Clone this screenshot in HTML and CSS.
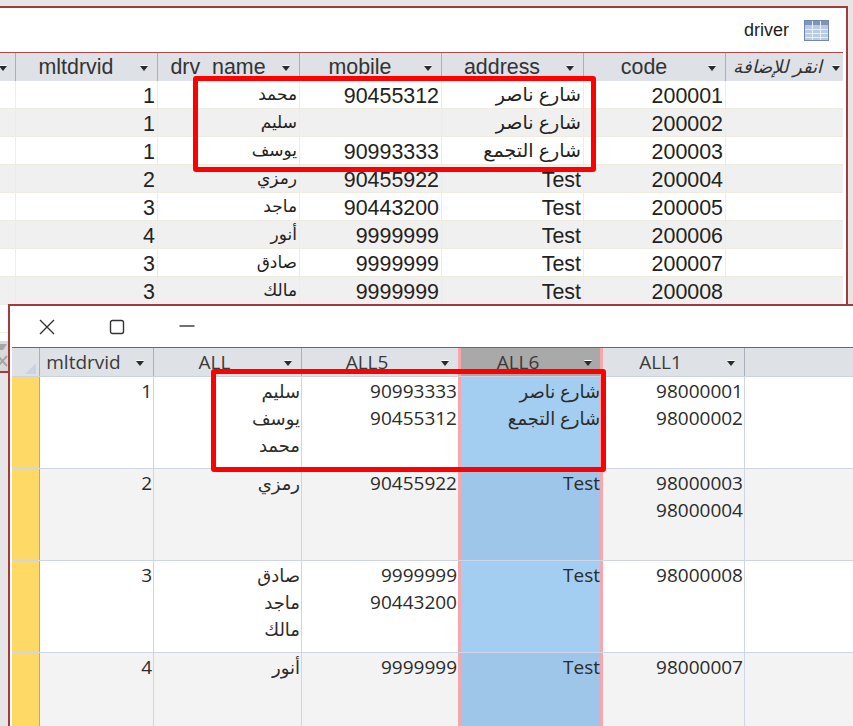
FILE: index.html
```html
<!DOCTYPE html>
<html lang="en">
<head>
<meta charset="utf-8">
<title>driver</title>
<link rel="stylesheet" href="styles.css">
</head>
<body>
<div class="desk">
  <section class="win win-back">
    <div class="back-title">
      <span class="back-name">driver</span>
      <svg class="tbl-icon" width="25" height="21" viewBox="0 0 25 21">
        <rect x="0.5" y="0.5" width="24" height="20" fill="#b9cbe4" stroke="#7388ad"/>
        <rect x="1" y="1" width="23" height="4" fill="#7d95bd"/>
        <path d="M1 9.5H24M1 13.5H24M1 17.5H24M8.5 1V20M16.5 1V20" stroke="#e9eef6" fill="none"/>
      </svg>
    </div>
    <div class="back-table">
      <div class="b-row b-head">
        <div class="b-h"><i class="arrow"></i></div>
        <div class="b-h"><span>mltdrvid</span><i class="arrow"></i></div>
        <div class="b-h"><span>drv_name</span><i class="arrow"></i></div>
        <div class="b-h"><span>mobile</span><i class="arrow"></i></div>
        <div class="b-h"><span>address</span><i class="arrow"></i></div>
        <div class="b-h"><span>code</span><i class="arrow"></i></div>
        <div class="b-h b-add"><span>انقر للإضافة</span><i class="arrow"></i></div>
      </div>
      <div class="b-row"><div></div><div>1</div><div class="nm">محمد</div><div>90455312</div><div class="ar">شارع ناصر</div><div>200001</div><div></div></div>
      <div class="b-row alt"><div></div><div>1</div><div class="nm">سليم</div><div></div><div class="ar">شارع ناصر</div><div>200002</div><div></div></div>
      <div class="b-row"><div></div><div>1</div><div class="nm">يوسف</div><div>90993333</div><div class="ar">شارع التجمع</div><div>200003</div><div></div></div>
      <div class="b-row alt"><div></div><div>2</div><div class="nm">رمزي</div><div>90455922</div><div>Test</div><div>200004</div><div></div></div>
      <div class="b-row"><div></div><div>3</div><div class="nm">ماجد</div><div>90443200</div><div>Test</div><div>200005</div><div></div></div>
      <div class="b-row alt"><div></div><div>4</div><div class="nm">أنور</div><div>9999999</div><div>Test</div><div>200006</div><div></div></div>
      <div class="b-row"><div></div><div>3</div><div class="nm">صادق</div><div>9999999</div><div>Test</div><div>200007</div><div></div></div>
      <div class="b-row alt"><div></div><div>3</div><div class="nm">مالك</div><div>9999999</div><div>Test</div><div>200008</div><div></div></div>
      <div class="b-row"></div>
    </div>
    <div class="back-foot">
      <svg class="foot-mark" width="8" height="30" viewBox="0 0 8 30">
        <path d="M0 3H7L3 9H0Z" fill="#a6a6a6"/>
        <path d="M-2 15L7 25M7 15L-2 25" stroke="#a6a6a6" stroke-width="2" fill="none"/>
      </svg>
    </div>
  </section>

  <section class="win win-front">
    <div class="front-title">
      <svg class="ctl" width="16" height="16" viewBox="0 0 16 16"><path d="M1 1L15 15M15 1L1 15" stroke="#333" stroke-width="1.4" fill="none"/></svg>
      <svg class="ctl" width="16" height="16" viewBox="0 0 16 16"><rect x="1.5" y="1.5" width="13" height="13" rx="2" stroke="#333" stroke-width="1.4" fill="none"/></svg>
      <svg class="ctl" width="16" height="16" viewBox="0 0 16 16"><path d="M0.5 7H15.5" stroke="#333" stroke-width="1.4" fill="none"/></svg>
    </div>
    <div class="front-table">
      <div class="f-row f-head">
        <div class="f-h f-corner"></div>
        <div class="f-h"><span>mltdrvid</span><i class="arrow"></i></div>
        <div class="f-h"><span>ALL</span><i class="arrow"></i></div>
        <div class="f-h"><span>ALL5</span><i class="arrow"></i></div>
        <div class="f-h sel"><span>ALL6</span><i class="arrow"></i></div>
        <div class="f-h"><span>ALL1</span><i class="arrow"></i></div>
        <div class="f-h f-end"></div>
      </div>
      <div class="f-row">
        <div class="rec"></div><div>1</div>
        <div class="ar"><p>سليم</p><p>يوسف</p><p>محمد</p></div>
        <div><p>90993333</p><p>90455312</p></div>
        <div class="sel ar"><p>شارع ناصر</p><p>شارع التجمع</p></div>
        <div><p>98000001</p><p>98000002</p></div><div></div>
      </div>
      <div class="f-row alt">
        <div class="rec"></div><div>2</div>
        <div class="ar"><p>رمزي</p></div>
        <div><p>90455922</p></div>
        <div class="sel"><p>Test</p></div>
        <div><p>98000003</p><p>98000004</p></div><div></div>
      </div>
      <div class="f-row">
        <div class="rec"></div><div>3</div>
        <div class="ar"><p>صادق</p><p>ماجد</p><p>مالك</p></div>
        <div><p>9999999</p><p>90443200</p></div>
        <div class="sel"><p>Test</p></div>
        <div><p>98000008</p></div><div></div>
      </div>
      <div class="f-row alt">
        <div class="rec"></div><div>4</div>
        <div class="ar"><p>أنور</p></div>
        <div><p>9999999</p></div>
        <div class="sel"><p>Test</p></div>
        <div><p>98000007</p></div><div></div>
      </div>
    </div>
  </section>

  <div class="mark mark-top"></div>
  <div class="mark mark-bottom"></div>
</div>
</body>
</html>
```

FILE: styles.css
```css
* { box-sizing: border-box; }
html, body { margin: 0; padding: 0; }
body { background: #e6e6e6; overflow: hidden; }
p { margin: 0; }

.desk { position: relative; width: 853px; height: 726px; overflow: hidden; }

.win { position: absolute; background: #fff; }

/* Back window */
.win-back {
  left: 0; top: 6px; width: 848px; height: 367px;
  border-top: 2px solid #a33a3f;
  border-right: 2px solid #a33a3f;
  border-bottom: 2px solid #a33a3f;
  padding-right: 3px;
  display: flex; flex-direction: column;
  font-family: "Liberation Sans", "DejaVu Sans", sans-serif;
  color: #222;
}
.back-title {
  height: 44px; flex: none;
  display: flex; align-items: center; justify-content: flex-end;
  gap: 15px; padding-right: 14px;
}
.back-name { font-size: 18px; color: #1c1c1c; }
.tbl-icon { display: block; }

.back-table { flex: 1; }
.b-row {
  display: grid;
  grid-template-columns: 16px repeat(5, 142px) 117px;
  height: 28px;
  border-bottom: 1px solid #efece0;
  font-size: 21.4px; line-height: 30px; text-align: right;
}
.b-row > div { border-right: 1px solid #efece0; padding-right: 2px; white-space: nowrap; overflow: hidden; }
.b-row > div:last-child { border-right: 0; }
.b-row.alt { background: #f0f0f0; }
.b-head {
  height: 29px; background: #dee1e6;
  border-top: 1px solid #b5474c; border-bottom: 0;
  color: #333;
}
.b-row > .b-h {
  display: flex; align-items: center; padding: 0 9px 0 0;
  border-right: 1px solid #aab0ba; text-align: center; overflow: hidden;
}
.b-h span { flex: 1; padding: 0 4px 0 0; line-height: 27px; }
.b-row > .b-h:first-child { justify-content: flex-end; padding-right: 8px; }
.b-row > .b-add { padding-right: 3px; border-right: 0; }
.b-add span { font-size: 18px; font-style: italic; padding-right: 10px; text-align: right; }
.b-row > .ar { font-size: 19px; line-height: 28px; }
.b-row > .nm { font-size: 17px; line-height: 28px; }

.back-foot {
  height: 30px; flex: none;
  background: #d9d9d9;
  margin-right: -3px;
}
.foot-mark { display: block; }

.arrow {
  display: block; flex: none; width: 0; height: 0; margin: 2px 0 0 0;
  border-left: 4px solid transparent; border-right: 4px solid transparent;
  border-top: 5px solid #2b2b2b;
  filter: drop-shadow(0 -1px 0 #fff);
}

/* Front window */
.win-front {
  left: 8px; top: 304px; right: 0; bottom: 0;
  border-top: 2px solid #a33a3f;
  border-left: 2px solid #a33a3f;
  padding-left: 2px;
  display: flex; flex-direction: column;
  font-family: "Open Sans", "DejaVu Sans", sans-serif;
  color: #2b2b2b;
}
.front-title {
  height: 41px; flex: none;
  display: flex; align-items: center; gap: 54px; padding-left: 27px;
}
.ctl { display: block; }

.front-table { flex: 1; }
.f-row {
  display: grid;
  grid-template-columns: 28px 114px 148px 156px 145px 142px 1fr;
  height: 92px;
  font-size: 19px; line-height: 27px; text-align: right;
  border-bottom: 1px solid #cdd5e6;
}
.f-row > div {
  border-right: 1px solid #cdd5e6;
  padding: 1px 1px 0 0; white-space: nowrap;
}
.f-row > div:nth-child(4) { border-right: 0; }
.f-row > .ar { font-size: 18px; }
.f-row > div:last-child { border-right: 0; }
.f-row.alt { background: #f3f3f3; }
.f-row > .rec { background: #ffd966; border-right: 1px solid #aaa; }
.f-row > .sel {
  background: #a3cef1;
  border-left: 3px solid #f7a6ab; border-right: 3px solid #f7a6ab;
  padding-right: 0;
}
.f-row.alt > .sel { background: #9dc6e9; }

.f-head {
  height: 30px; background: #dee1e6; border-top: 1px solid #b5474c; border-bottom: 1px solid #ccd2de;
  color: #3a3a3a; font-size: 19px; text-align: center;
}
.f-row > .f-h {
  display: flex; align-items: center; padding: 0 9px 0 0;
  border-right: 1px solid #aab0ba;
}
.f-h span { flex: 1; padding-right: 9px; }
.f-corner { position: relative; }
.f-corner::after {
  content: ""; position: absolute; right: 3px; bottom: 2px;
  width: 0; height: 0;
  border-left: 11px solid transparent;
  border-bottom: 11px solid #c9d3e4;
}
.f-row > .f-h.sel { background: #a9a9a9; padding-right: 8px; border-left: 3px solid #f7a6ab; border-right: 3px solid #f7a6ab; }
.f-row > .f-end { border-right: 0; }

/* Annotation rectangles */
.mark { position: absolute; border: 5px solid #ff0000; border-radius: 3px; }
.mark-top { left: 193px; top: 76px; width: 403px; height: 96px; }
.mark-bottom { left: 211px; top: 369px; width: 395px; height: 103px; }
```
